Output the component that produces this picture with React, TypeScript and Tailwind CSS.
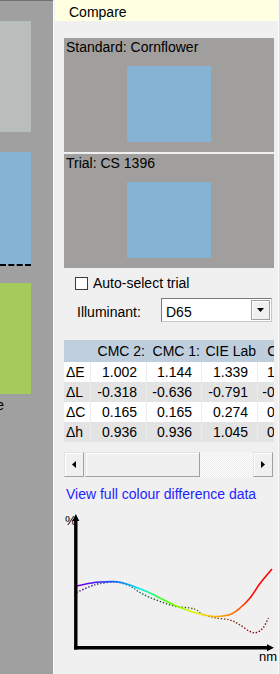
import React from "react";

type Pt = [number, number];

const HEADERS = ["CMC 2:", "CMC 1:", "CIE Lab", "CIE 94"];

const ROWS = [
  { label: "ΔE", values: ["1.002", "1.144", "1.339", "1.162"] },
  { label: "ΔL", values: ["-0.318", "-0.636", "-0.791", "-0.791"] },
  { label: "ΔC", values: ["0.165", "0.165", "0.274", "0.214"] },
  { label: "Δh", values: ["0.936", "0.936", "1.045", "0.843"] },
];

// trial curve (solid, spectrum coloured)
const TRIAL: Pt[] = [
  [76.5, 586], [90, 583.3], [100, 582], [116.5, 581.8], [126.5, 584],
  [136.5, 587.5], [150, 593], [163, 599.5], [176.5, 606], [190, 611],
  [206.5, 615.5], [216.5, 616.5], [230, 614.5], [240, 608], [250, 598],
  [260, 583.5], [272, 569],
];

// standard curve (dotted, darker)
const STANDARD: Pt[] = [
  [76.5, 592.5], [90, 586.5], [100, 583.5], [116, 582], [130, 586],
  [140, 592.5], [150, 597.5], [163, 602.5], [176.5, 606.5], [190, 608],
  [196.5, 610], [203, 614.5], [216.5, 618], [230, 620], [240, 625],
  [250, 631.5], [256.5, 632.5], [263, 628], [268.5, 618],
];

function smoothPath(pts: Pt[]) {
  let d = `M${pts[0][0]},${pts[0][1]}`;
  for (let i = 0; i < pts.length - 1; i++) {
    const p0 = pts[i - 1] ?? pts[i];
    const p1 = pts[i];
    const p2 = pts[i + 1];
    const p3 = pts[i + 2] ?? p2;
    const c1x = p1[0] + (p2[0] - p0[0]) / 6;
    const c1y = p1[1] + (p2[1] - p0[1]) / 6;
    const c2x = p2[0] - (p3[0] - p1[0]) / 6;
    const c2y = p2[1] - (p3[1] - p1[1]) / 6;
    d += ` C${c1x},${c1y} ${c2x},${c2y} ${p2[0]},${p2[1]}`;
  }
  return d;
}

function LeftPanel() {
  return (
    <div className="w-[53px] shrink-0 flex flex-col bg-[#a0a0a0] border-t border-[#707070] overflow-hidden">
      <div className="mt-[20px] w-[31px] h-[111px] bg-[#b9bdbc]" />
      <div className="mt-[20px] w-[31px] h-[114px] bg-[#86b3d4] border-b-2 border-dashed border-black" />
      <div className="mt-[17px] w-[31px] h-[111px] bg-[#a6cb5c]" />
      <div className="mt-[3px] w-[4px] flex justify-end leading-[16px] whitespace-nowrap">
        <span>Lime</span>
      </div>
    </div>
  );
}

function SampleBox({ label, className }: { label: string; className?: string }) {
  return (
    <div className={`w-[210px] h-[114px] bg-[#a09f9d] flex flex-col ${className ?? ""}`}>
      <div className="pl-[2px] leading-[18px] whitespace-nowrap">{label}</div>
      <div className="mt-[10px] ml-[63px] w-[84px] h-[76px] bg-[#86b3d4]" />
    </div>
  );
}

function DiffTable() {
  return (
    <div className="mt-[18px] w-[210px] overflow-hidden">
      <div className="w-max">
        <div className="grid grid-cols-[26px_56px_55px_56px_54px] h-[22px] leading-[22px] bg-[#bfcedc]">
          <div />
          {HEADERS.map((h) => (
            <div key={h} className="text-right pr-[1px] whitespace-nowrap">
              {h}
            </div>
          ))}
        </div>
        {ROWS.map((row, i) => (
          <div
            key={row.label}
            className={`grid grid-cols-[26px_56px_55px_56px_54px] h-[20px] leading-[20px] ${
              i % 2 === 0 ? "bg-white" : "bg-[#e3e3e3]"
            }`}
          >
            <div className="pl-[2px]">{row.label}</div>
            {row.values.map((v, j) => (
              <div key={j} className="border-l border-[#ececec] text-right pr-[9px]">
                {v}
              </div>
            ))}
          </div>
        ))}
      </div>
    </div>
  );
}

function ScrollButton({ dir }: { dir: "left" | "right" }) {
  return (
    <div className="w-[20px] h-[25px] shrink-0 flex items-center justify-center bg-[#f0f0f0] border border-t-[#e3e3e3] border-l-[#e3e3e3] border-r-[#a0a0a0] border-b-[#a0a0a0] shadow-[inset_1px_1px_0_#ffffff]">
      <svg width="4" height="7" viewBox="0 0 4 7">
        {dir === "left" ? (
          <polygon points="4,0 4,7 0,3.5" fill="#000" />
        ) : (
          <polygon points="0,0 0,7 4,3.5" fill="#000" />
        )}
      </svg>
    </div>
  );
}

function ScrollBar() {
  return (
    <div className="mt-[10px] w-[209px] h-[25px] flex">
      <ScrollButton dir="left" />
      <div className="w-[115px] h-[25px] ml-px bg-[#f0f0f0] border border-t-[#e3e3e3] border-l-[#e3e3e3] border-r-[#a0a0a0] border-b-[#a0a0a0] shadow-[inset_1px_1px_0_#ffffff]" />
      <div className="w-[53px] h-[25px] bg-[repeating-conic-gradient(#ffffff_0%_25%,#ebebeb_0%_50%)] bg-[length:2px_2px]" />
      <ScrollButton dir="right" />
    </div>
  );
}

function ReflectanceChart() {
  return (
    <svg width="223" height="171" viewBox="55 503 223 171" className="block">
      <defs>
        <linearGradient id="spectrum" gradientUnits="userSpaceOnUse" x1="76" y1="0" x2="272" y2="0">
          <stop offset="0" stopColor="#7a00e0" />
          <stop offset="0.09" stopColor="#4a10ff" />
          <stop offset="0.2" stopColor="#1060ff" />
          <stop offset="0.27" stopColor="#00b0ff" />
          <stop offset="0.33" stopColor="#00f0f0" />
          <stop offset="0.4" stopColor="#20ff60" />
          <stop offset="0.46" stopColor="#50ff00" />
          <stop offset="0.55" stopColor="#b0ff00" />
          <stop offset="0.62" stopColor="#e8f000" />
          <stop offset="0.68" stopColor="#ffc800" />
          <stop offset="0.76" stopColor="#ff9000" />
          <stop offset="0.84" stopColor="#ff5000" />
          <stop offset="0.9" stopColor="#ff0000" />
          <stop offset="1" stopColor="#ff0000" />
        </linearGradient>
        <linearGradient id="spectrumDark" gradientUnits="userSpaceOnUse" x1="76" y1="0" x2="272" y2="0">
          <stop offset="0" stopColor="#40006a" />
          <stop offset="0.15" stopColor="#20207a" />
          <stop offset="0.3" stopColor="#006070" />
          <stop offset="0.42" stopColor="#106020" />
          <stop offset="0.56" stopColor="#406000" />
          <stop offset="0.66" stopColor="#705800" />
          <stop offset="0.78" stopColor="#803000" />
          <stop offset="0.88" stopColor="#800000" />
          <stop offset="1" stopColor="#800000" />
        </linearGradient>
      </defs>
      <text x="65" y="525" fontSize="13" fill="#000" fontFamily="'Liberation Sans', Arial, sans-serif">
        %
      </text>
      <text x="259" y="661" fontSize="13" fill="#000" fontFamily="'Liberation Sans', Arial, sans-serif">
        nm
      </text>
      <path d={smoothPath(STANDARD)} fill="none" stroke="url(#spectrumDark)" strokeWidth="1.4" strokeDasharray="1.4 1.8" />
      <path d={smoothPath(TRIAL)} fill="none" stroke="url(#spectrum)" strokeWidth="1.6" />
      <line x1="75.8" y1="519" x2="75.8" y2="649.5" stroke="#000" strokeWidth="3.4" />
      <polygon points="75.8,514 72.3,521 79.3,521" fill="#000" />
      <line x1="74" y1="647.8" x2="268" y2="647.8" stroke="#000" strokeWidth="3.6" />
      <polygon points="274,647.8 267,644.3 267,651.3" fill="#000" />
    </svg>
  );
}

function ComparePanel() {
  return (
    <div className="w-[225px] shrink-0 flex">
      <div className="w-[223px] flex flex-col">
        <div className="h-[21px] bg-[#ffffe1] pl-[14px] pt-[2px] leading-[20px]">Compare</div>
        <div className="pl-[9px] flex flex-col">
          <SampleBox label="Standard: Cornflower" className="mt-[17px]" />
          <SampleBox label="Trial: CS 1396" className="mt-[2px]" />

          <div className="mt-[7px] h-[16px] flex items-center">
            <div className="ml-[11px] w-[13px] h-[13px] bg-white border border-[#3c3c3c]" />
            <span className="ml-[5px] leading-[16px] whitespace-nowrap">Auto-select trial</span>
          </div>

          <div className="mt-[7px] h-[24px] flex">
            <div className="ml-[13px] w-[84px] pt-[2px] leading-[24px]">Illuminant:</div>
            <div className="w-[111px] h-[24px] flex bg-white border border-t-[#7a7a7a] border-l-[#7a7a7a] border-r-[#c8c8c8] border-b-[#c8c8c8]">
              <span className="pl-[4px] pt-[2px] leading-[22px]">D65</span>
              <div className="ml-auto mr-px mt-px w-[19px] h-[20px] flex items-center justify-center bg-[#f0f0f0] border border-[#a0a0a0] shadow-[inset_1px_1px_0_#ffffff]">
                <svg width="7" height="4" viewBox="0 0 7 4">
                  <polygon points="0,0 7,0 3.5,4" fill="#000" />
                </svg>
              </div>
            </div>
          </div>

          <DiffTable />
          <ScrollBar />

          <div className="mt-[8px] pl-[2px] leading-[18px] text-[#1f1fff] whitespace-nowrap">
            View full colour difference data
          </div>
        </div>
        <div className="-ml-0">
          <ReflectanceChart />
        </div>
      </div>
      <div className="w-px bg-[#fbfbfb]" />
      <div className="w-px bg-[#dcdcdc]" />
    </div>
  );
}

export default function App() {
  return (
    <div className="flex w-[280px] h-[674px] overflow-hidden bg-[#f0f0f0] font-['Liberation_Sans',Arial,sans-serif] text-[14px] text-black">
      <LeftPanel />
      <div className="w-px bg-[#fafafa]" />
      <div className="w-px bg-[#f0f0f0]" />
      <ComparePanel />
    </div>
  );
}
